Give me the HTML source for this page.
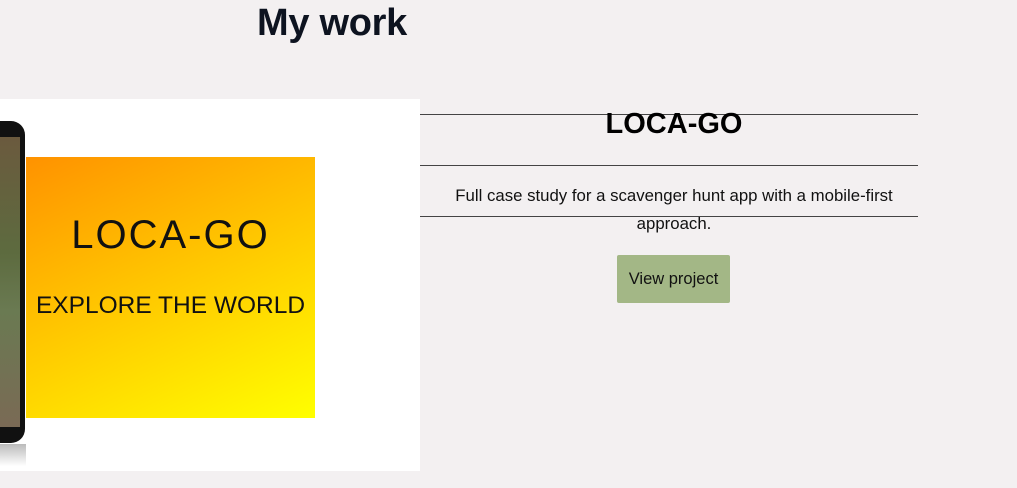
<!DOCTYPE html>
<html><head><style>
body{margin:0;width:1017px;height:488px;background:#f3f0f1;font-family:"Liberation Sans",sans-serif;position:relative;overflow:hidden;color:#111}
.a{position:absolute}
</style></head><body>
<div class="a" style="left:257px;top:2px;font-size:38px;font-weight:bold;color:#0d1320;letter-spacing:-0.3px">My work</div>
<div class="a" style="left:0;top:99px;width:420px;height:372px;background:#fff">
 <div class="a" style="left:-10px;top:22px;width:35px;height:322px;background:#111;border-radius:0 14px 14px 0"></div>
 <div class="a" style="left:-10px;top:38px;width:30px;height:290px;background:linear-gradient(#6b5a3e,#5d6b3f 40%,#6a7a52 60%,#7a6a55)"></div>
 <div class="a" style="left:0;top:345px;width:26px;height:22px;background:linear-gradient(#bbb,#fff)"></div>
 <div class="a" style="left:26px;top:58px;width:289px;height:261px;background:linear-gradient(155deg,#ff9200,#ffc400 45%,#ffff00)"></div>
 <div class="a" style="left:26px;top:114px;width:289px;text-align:center;font-size:40px;letter-spacing:2px;color:#111">LOCA-GO</div>
 <div class="a" style="left:24px;top:193px;width:293px;text-align:center;font-size:24.5px;color:#111">EXPLORE THE WORLD</div>
</div>
<div class="a" style="left:420px;top:114px;width:498px;height:1px;background:#444"></div>
<div class="a" style="left:420px;top:165px;width:498px;height:1px;background:#444"></div>
<div class="a" style="left:420px;top:216px;width:498px;height:1px;background:#444"></div>
<div class="a" style="left:420px;top:108px;width:508px;text-align:center;font-size:29px;font-weight:bold;color:#000">LOCA-GO</div>
<div class="a" style="left:430px;top:182px;width:488px;text-align:center;font-size:16.8px;line-height:28px;color:#111">Full case study for a scavenger hunt app with a mobile-first approach.</div>
<div class="a" style="left:617px;top:255px;width:113px;height:48px;background:#a3b786;border-radius:2px;font-size:16.5px;line-height:48px;text-align:center;color:#111">View project</div>
</body></html>
